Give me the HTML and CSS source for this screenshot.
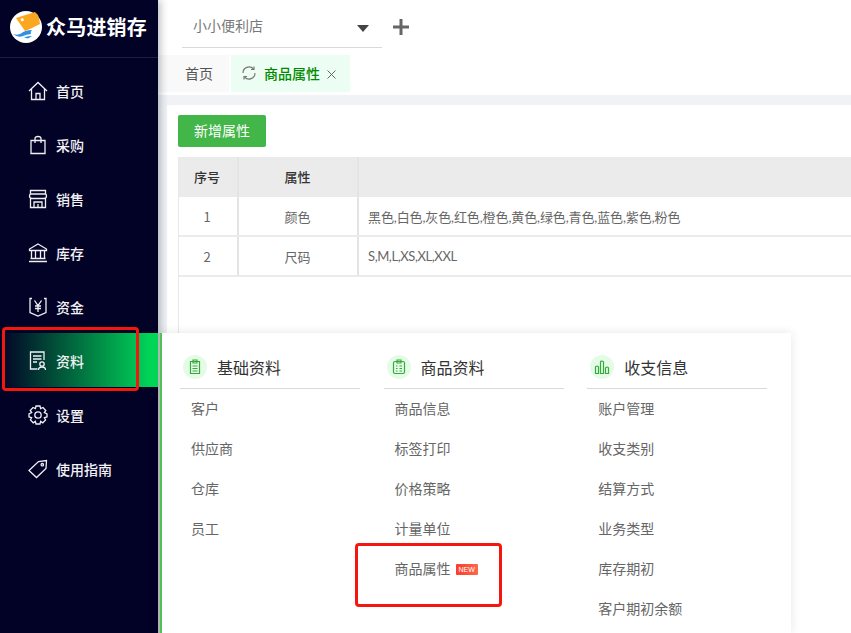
FILE: index.html
```html
<!DOCTYPE html>
<html lang="zh">
<head>
<meta charset="utf-8">
<title>众马进销存</title>
<link rel="stylesheet" href="styles.css">
</head>
<body>
<div class="app">
  <aside class="sidebar">
    <div class="brand">
      <svg class="logo" viewBox="0 0 32 32" width="32" height="32">
        <circle cx="16" cy="16" r="16" fill="#fff"/>
        <path d="M6 7 L25 1 Q28 3 29 7 L30 13 L20 18 L15 20 Z" fill="#fba71f"/>
        <path d="M10.500 8 L13 7 L14 9.500 L11.500 10.500 Z" fill="#fff"/>
        <path d="M3 23 Q8 24.500 11 22.500 Q15 19 22 19 Q20 21 21 23 Q16 23.500 13 25 Q8 27 3 23 Z" fill="#2f8fe3"/>
        <path d="M14 26.500 Q18 24.500 22 25 L18 27.500 Z" fill="#2f8fe3"/>
      </svg>
      <span class="brand-name">众马进销存</span>
    </div>
    <nav class="nav">
      <a class="nav-item">
        <svg class="nav-icon" viewBox="0 0 20 20"><path d="M1 10 L10 1.500 L19 10 M3.500 8 V18.500 H16.500 V8 M8 18.500 V12.500 H12 V18.500"/></svg>
        <span>首页</span>
      </a>
      <a class="nav-item">
        <svg class="nav-icon" viewBox="0 0 20 20"><path d="M3 5.500 H17 V18.500 H3 Z M7 8 V3.500 Q7 1.500 10 1.500 Q13 1.500 13 3.500 V8"/></svg>
        <span>采购</span>
      </a>
      <a class="nav-item">
        <svg class="nav-icon" viewBox="0 0 20 20"><path d="M2.500 1.500 H17.500 V5 H2.500 Z M2 5 L1.500 7 Q1.500 9.500 4.500 9.500 H15.500 Q18.500 9.500 18.500 7 L18 5 M2.500 9.500 V18.500 H17.500 V9.500 M6 18.500 V13 H14 V18.500 M10 18.500 V15"/></svg>
        <span>销售</span>
      </a>
      <a class="nav-item">
        <svg class="nav-icon" viewBox="0 0 20 20"><path d="M10 1 L18.500 6 V7.500 H1.500 V6 Z M3.500 7.500 V15.500 M7.500 7.500 V15.500 M12.500 7.500 V15.500 M16.500 7.500 V15.500 M2.500 15.500 H17.500 M1 18.500 H19"/></svg>
        <span>库存</span>
      </a>
      <a class="nav-item">
        <svg class="nav-icon" viewBox="0 0 20 20"><path d="M4 1.500 H2 V15.500 L10 19 L18 15.500 V1.500 H16 M6.500 3.500 L10 8.500 L13.500 3.500 M10 8.500 V15 M7 9 H13 M7 11.500 H13"/></svg>
        <span>资金</span>
      </a>
      <a class="nav-item nav-item-active">
        <svg class="nav-icon" viewBox="0 0 20 20"><path d="M9.500 18 H2.500 V1 H16 V9 M5 5 H13.500 M5 8 H13.500 M5 11 H9"/><circle cx="14" cy="13" r="2.200"/><path d="M10.500 19 Q10.500 16 14 16 Q17.500 16 17.500 19"/></svg>
        <span>资料</span>
      </a>
      <a class="nav-item">
        <svg class="nav-icon" viewBox="0 0 20 20"><path d="M8 1 H12 L12.600 3.600 L15 2.500 L17.800 5.500 L16.300 7.600 L19 9 V12 L16.400 12.700 L17.600 15 L14.800 17.800 L12.600 16.400 L12 19 H8 L7.400 16.400 L5.200 17.800 L2.400 15 L3.600 12.700 L1 12 V9 L3.700 7.600 L2.200 5.500 L5 2.500 L7.400 3.600 Z"/><circle cx="10" cy="10" r="3.200"/></svg>
        <span>设置</span>
      </a>
      <a class="nav-item">
        <svg class="nav-icon" viewBox="0 0 20 20"><path d="M1 11.500 L10.500 2.500 L18.500 1.500 L18 9.500 L8.500 18.500 Z"/><circle cx="14.300" cy="5.700" r="1.200"/></svg>
        <span>使用指南</span>
      </a>
    </nav>
  </aside>

  <main class="main">
    <header class="topbar">
      <div class="store-select">
        <span>小小便利店</span>
        <i class="caret"></i>
      </div>
      <svg class="plus" viewBox="0 0 16 16" width="16" height="16"><path d="M8 0 V16 M0 8 H16"/></svg>
    </header>
    <div class="tabs">
      <div class="tab">首页</div>
      <div class="tab tab-active">
        <svg class="refresh" viewBox="0 0 14 14" width="14" height="14"><path d="M1 7 A6 6 0 0 1 11.500 3 M13 7 A6 6 0 0 1 2.500 11"/><path d="M12 .5 V3.500 H9 M2 13.500 V10.500 H5"/></svg>
        <span class="tab-title">商品属性</span>
        <svg class="tab-close" viewBox="0 0 9 9" width="9" height="9"><path d="M.5 .5 L8.500 8.500 M8.500 .5 L.5 8.500"/></svg>
      </div>
    </div>
    <section class="content">
      <button class="btn-add">新增属性</button>
      <div class="table">
        <div class="row row-head">
          <div class="cell cell-no">序号</div>
          <div class="cell cell-name">属性</div>
          <div class="cell cell-values"></div>
        </div>
        <div class="row">
          <div class="cell cell-no">1</div>
          <div class="cell cell-name">颜色</div>
          <div class="cell cell-values">黑色,白色,灰色,红色,橙色,黄色,绿色,青色,蓝色,紫色,粉色</div>
        </div>
        <div class="row">
          <div class="cell cell-no">2</div>
          <div class="cell cell-name">尺码</div>
          <div class="cell cell-values cell-latin">S,M,L,XS,XL,XXL</div>
        </div>
      </div>
    </section>
  </main>

  <div class="flyout">
    <div class="fly-col">
      <div class="fly-head">
        <span class="fly-icon"><svg viewBox="0 0 14 16" width="14" height="16"><path d="M2.500 2.500 H11.500 V14.500 H2.500 Z M5 1 H9 V4 H5 Z M4.500 7 H9.500 M4.500 9.500 H9.500 M4.500 12 H9.500"/></svg></span>
        <span>基础资料</span>
      </div>
      <a class="fly-link">客户</a>
      <a class="fly-link">供应商</a>
      <a class="fly-link">仓库</a>
      <a class="fly-link">员工</a>
    </div>
    <div class="fly-col">
      <div class="fly-head">
        <span class="fly-icon"><svg viewBox="0 0 14 16" width="14" height="16"><path d="M3 2.500 H11 Q12.500 2.500 12.500 4 V13 Q12.500 14.500 11 14.500 H3 Q1.500 14.500 1.500 13 V4 Q1.500 2.500 3 2.500 Z M5 1 H9 V4 H5 Z M4 7 H5.500 M7.500 7 H10 M4 9.500 H5.500 M7.500 9.500 H10 M4 12 H5.500 M7.500 12 H10"/></svg></span>
        <span>商品资料</span>
      </div>
      <a class="fly-link">商品信息</a>
      <a class="fly-link">标签打印</a>
      <a class="fly-link">价格策略</a>
      <a class="fly-link">计量单位</a>
      <a class="fly-link">商品属性<em class="badge-new">NEW</em></a>
    </div>
    <div class="fly-col">
      <div class="fly-head">
        <span class="fly-icon"><svg viewBox="0 0 16 16" width="16" height="16"><path d="M1.500 8 Q1.500 7 3 7 Q4.500 7 4.500 8 V14.500 H1.500 Z M6.500 3 Q6.500 2 8 2 Q9.500 2 9.500 3 V14.500 H6.500 Z M11.500 9 Q11.500 8 13 8 Q14.500 8 14.500 9 V14.500 H11.500 Z"/></svg></span>
        <span>收支信息</span>
      </div>
      <a class="fly-link">账户管理</a>
      <a class="fly-link">收支类别</a>
      <a class="fly-link">结算方式</a>
      <a class="fly-link">业务类型</a>
      <a class="fly-link">库存期初</a>
      <a class="fly-link">客户期初余额</a>
    </div>
  </div>

  <div class="mark mark-nav"></div>
  <div class="mark mark-item"></div>
</div>
</body>
</html>
```

FILE: styles.css
```css
* { box-sizing: border-box; }
html, body { margin: 0; padding: 0; height: 100%; overflow: hidden; }
body { font-family: "Noto Sans CJK SC", "Noto Sans", sans-serif; font-size: 13px; color: #666; background: #f0f2f5; }

.app { position: relative; display: flex; width: 851px; height: 633px; overflow: hidden; }

/* sidebar */
.sidebar { position: relative; z-index: 2; flex: 0 0 158px; background: #020126; box-shadow: 2px 0 8px rgba(0, 21, 41, .3); }
.brand { display: flex; align-items: center; gap: 4px; height: 58px; padding: 0 0 4px 10px; border-bottom: 1px solid #1e1d3f; }
.logo { flex: none; }
.brand-name { color: #fff; font-size: 20px; font-weight: 700; letter-spacing: .2px; line-height: 28px; white-space: nowrap; }
.nav { display: flex; flex-direction: column; padding-top: 5px; }
.nav-item { display: flex; align-items: center; gap: 8px; height: 54px; padding-left: 28px; color: #f2f2f5; font-size: 14px; font-weight: 500; line-height: 20px; }
.nav-item span { margin-top: 1px; }
.nav-icon { flex: none; width: 20px; height: 20px; margin-top: 2px; fill: none; stroke: #f0f0f4; stroke-width: 1.300; }
.nav-item-active { background: linear-gradient(90deg, #020126 0, #00e05a 100%); }

/* main */
.main { flex: 1; display: flex; flex-direction: column; min-width: 0; }
.topbar { display: flex; align-items: center; gap: 11px; height: 53px; padding: 0 0 0 24px; background: #fff; box-shadow: 0 1px 3px rgba(0, 0, 0, .06); }
.store-select { display: flex; align-items: center; justify-content: space-between; width: 200px; height: 43px; padding: 0 13px 2px 11px; border-bottom: 1px solid #d9d9d9; font-size: 14px; color: #777; line-height: 20px; }
.caret { width: 0; height: 0; margin-top: 7px; border-left: 6px solid transparent; border-right: 6px solid transparent; border-top: 7px solid #444; }
.plus { flex: none; margin-top: 1px; fill: none; stroke: #666; stroke-width: 3; }

.tabs { display: flex; gap: 2px; height: 42px; padding: 2px 0 3px 0; background: #fff; }
.tab { display: flex; align-items: center; width: 71px; padding: 0 0 2px 27px; background: #f9f9f9; color: #555; font-size: 14px; }
.tab-active { width: 119px; padding: 0 0 2px 11px; background: #ecfdf3; }
.refresh { flex: none; margin-right: 8px; fill: none; stroke: #777; stroke-width: 1.200; }
.tab-title { color: #008a00; font-weight: 500; }
.tab-close { flex: none; margin: 3px 0 0 7px; fill: none; stroke: #666; stroke-width: 1; }

.content { flex: 1; margin: 10px 0 0 9px; padding: 10px 0 0 11px; background: #fff; }
.btn-add { display: block; width: 88px; height: 32px; padding: 0 0 2px; border: 0; border-radius: 2px; background: #43b649; color: #fff; font: 14px/30px "Noto Sans CJK SC", sans-serif; }

.table { height: 300px; margin-top: 10px; border-left: 1px solid #e8e8e8; }
.row { display: flex; height: 40px; border-bottom: 2px solid #ebebeb; }
.row-head { border-bottom: 0; background: #ebebeb; color: #333; font-weight: 500; }
.row-head .cell { padding-bottom: 2px; }
.cell { display: flex; align-items: center; justify-content: center; height: 100%; border-right: 2px solid #e4e4e4; }
.cell-no { width: 60px; padding-right: 2px; }
.cell-name { width: 120px; padding-right: 1px; }
.cell-values { flex: 1; justify-content: flex-start; padding: 0 0 0 9px; border-right: 0; font-family: Lato, "Noto Sans CJK SC", sans-serif; letter-spacing: -.1px; white-space: nowrap; }
.cell-latin { letter-spacing: -.4px; }

/* flyout */
.flyout { position: absolute; z-index: 3; left: 158px; top: 333px; display: flex; gap: 23.600px; width: 633px; height: 300px; padding: 0 0 0 20px; background: #fff; border-left: 2px solid #aeb4ae; box-shadow: inset 2px 0 0 #4fc155, 0 0 10px rgba(0, 0, 0, .1); }
.fly-col { display: flex; flex-direction: column; width: 180px; }
.fly-head { display: flex; align-items: center; gap: 10px; height: 56px; padding: 12px 0 0 3px; border-bottom: 1px solid #d9d9d9; font-size: 16px; color: #333; }
.fly-icon { display: flex; align-items: center; justify-content: center; width: 24px; height: 24px; border-radius: 50%; background: #e4fbe6; }
.fly-icon svg { fill: none; stroke: #36a93c; stroke-width: 1.200; }
.fly-link { display: flex; align-items: center; height: 40px; padding: 0 0 2px 11px; color: #666; font-size: 14px; line-height: 20px; }
.badge-new { display: inline-block; width: 22px; height: 11px; margin: 2px 0 0 5px; border-radius: 1px; background: linear-gradient(90deg, #fb3c30, #fb6a4a); color: #fff; font: normal 7px/11px "Liberation Sans", sans-serif; text-align: center; }

/* annotations */
.mark { position: absolute; z-index: 4; border: 3px solid #f5170f; border-radius: 4px; pointer-events: none; }
.mark-nav { left: 2px; top: 327px; width: 137px; height: 64px; }
.mark-item { left: 355px; top: 543px; width: 147px; height: 64px; }
```
